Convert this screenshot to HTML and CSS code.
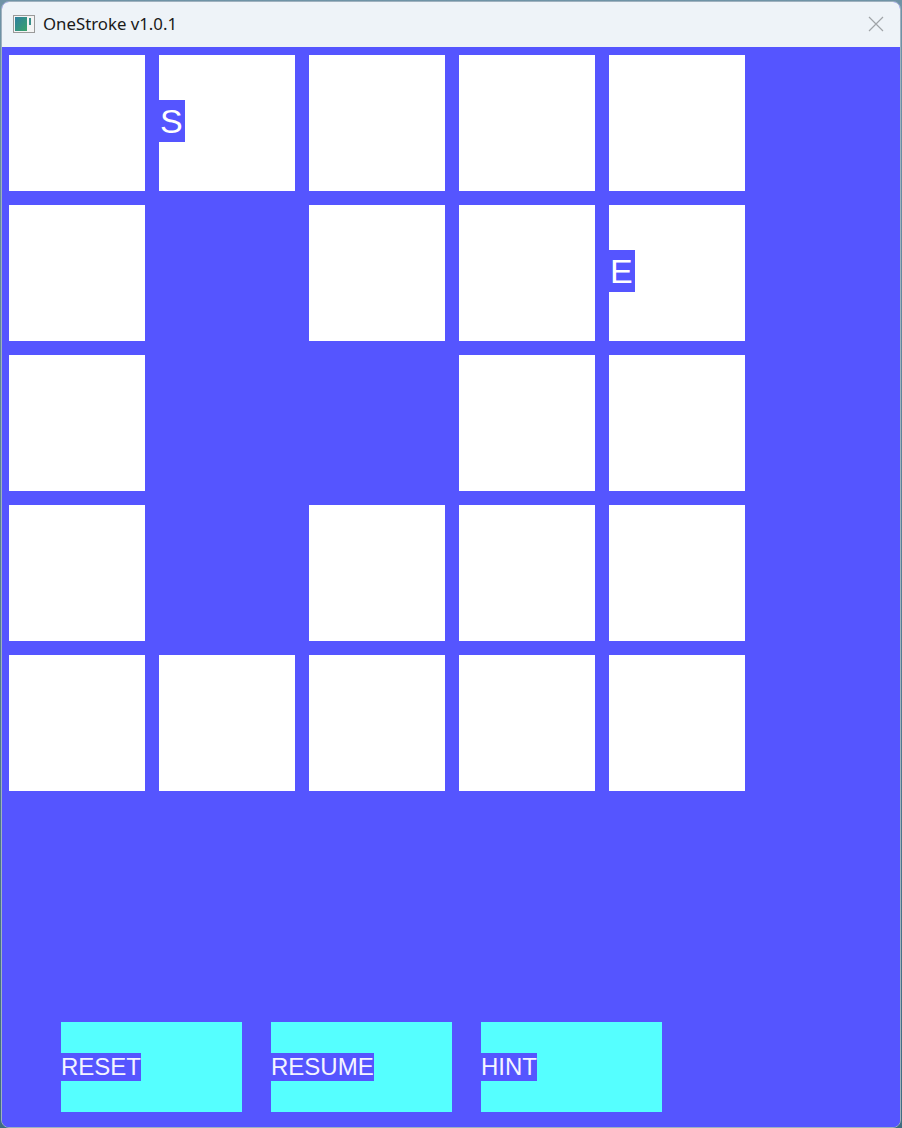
FILE: index.html
```html
<!DOCTYPE html>
<html>
<head>
  <meta charset="utf-8">
  <title>OneStroke v1.0.1</title>
  <link rel="stylesheet" href="styles.css">
</head>
<body>
  <div class="window">
    <div class="titlebar">
      <svg class="app-icon" width="22" height="18" viewBox="0 0 22 18">
        <defs>
          <linearGradient id="g" x1="0" y1="0" x2="1" y2="1">
            <stop offset="0" stop-color="#2f7fa0"/>
            <stop offset="1" stop-color="#3aa36a"/>
          </linearGradient>
        </defs>
        <rect x="0.5" y="0.5" width="21" height="17" fill="#f4f4f4" stroke="#9a9a9a"/>
        <rect x="2" y="2" width="12" height="14" fill="url(#g)"/>
        <rect x="16" y="3" width="2" height="7" fill="#3a8f8a"/>
      </svg>
      <span class="title">OneStroke v1.0.1</span>
      <svg class="close" width="16" height="16" viewBox="0 0 16 16">
        <path d="M1 1 L15 15 M15 1 L1 15" stroke="#a0a4a8" stroke-width="1.2" fill="none"/>
      </svg>
    </div>

    <div class="content">
      <div class="board">
        <div class="cell"></div>
        <div class="cell"><span class="mark">S</span></div>
        <div class="cell"></div>
        <div class="cell"></div>
        <div class="cell"></div>

        <div class="cell"></div>
        <div class="cell empty"></div>
        <div class="cell"></div>
        <div class="cell"></div>
        <div class="cell"><span class="mark">E</span></div>

        <div class="cell"></div>
        <div class="cell empty"></div>
        <div class="cell empty"></div>
        <div class="cell"></div>
        <div class="cell"></div>

        <div class="cell"></div>
        <div class="cell empty"></div>
        <div class="cell"></div>
        <div class="cell"></div>
        <div class="cell"></div>

        <div class="cell"></div>
        <div class="cell"></div>
        <div class="cell"></div>
        <div class="cell"></div>
        <div class="cell"></div>
      </div>

      <div class="buttons">
        <div class="btn"><span class="label">RESET</span></div>
        <div class="btn"><span class="label">RESUME</span></div>
        <div class="btn"><span class="label">HINT</span></div>
      </div>
    </div>
  </div>
</body>
</html>
```

FILE: styles.css
```css
html, body {
  margin: 0;
  padding: 0;
}
body {
  background: linear-gradient(180deg, #6f93a6 0%, #3f6d80 100%);
  width: 902px;
  height: 1128px;
  overflow: hidden;
}
.window {
  margin: 1px 0 0 1px;
  width: 898px;
  height: 1125px;
  border: 1px solid #9fb1bf;
  border-radius: 8px;
  overflow: hidden;
  display: flex;
  flex-direction: column;
  background: #5555ff;
}
.titlebar {
  height: 45px;
  flex: none;
  background: #eef3f8;
  display: flex;
  align-items: center;
  padding: 0 16px 0 11px;
  font-family: "Noto Sans", "Open Sans", sans-serif;
  font-size: 16.8px;
  color: #1a1a1a;
}
.app-icon {
  margin-right: 8px;
  margin-top: -1px;
}
.title {
  flex: 1;
  margin-top: -2px;
}
.close {
  margin-top: -1px;
}
.content {
  flex: 1;
  padding: 8px 0 0 7px;
  background: #5555ff;
}
.board {
  display: grid;
  grid-template-columns: repeat(5, 136px);
  grid-template-rows: repeat(5, 136px);
  gap: 14px;
}
.cell {
  background: #ffffff;
  display: flex;
  align-items: center;
}
.cell.empty {
  background: transparent;
}
.mark {
  background: #5555ff;
  color: #ffffff;
  font-family: "Liberation Sans", Arial, sans-serif;
  font-size: 34px;
  line-height: 42px;
  height: 42px;
  padding: 0 2px 0 1px;
  margin-top: -5px;
}
.buttons {
  display: flex;
  gap: 29px;
  margin: 231px 0 0 52px;
}
.btn {
  width: 181px;
  height: 90px;
  background: #55ffff;
  display: flex;
  align-items: center;
}
.label {
  background: #5555ff;
  color: #f4f4ff;
  font-family: "Liberation Sans", Arial, sans-serif;
  font-size: 24px;
  line-height: 28px;
  height: 28px;
  margin-top: -1px;
}
```
